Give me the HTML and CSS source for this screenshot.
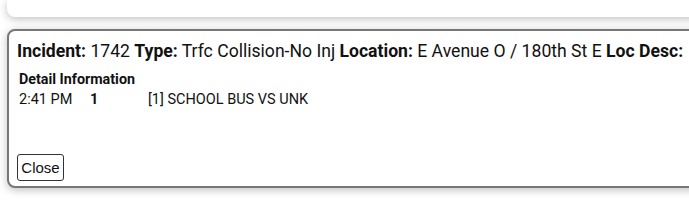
FILE: index.html
```html
<!DOCTYPE html>
<html lang="en">
<head>
  <meta charset="UTF-8">
  <meta name="viewport" content="width=device-width, initial-scale=1.0">
  <title>Incident Detail</title>
  <link rel="stylesheet" href="styles.css">
</head>
<body>
  <div class="card card-prev"></div>

  <div class="card incident">
    <div class="summary">
      <b>Incident:</b> 1742 <b>Type:</b> Trfc Collision-No Inj <b>Location:</b> E Avenue O / 180th St E <b>Loc Desc:</b>
    </div>
    <div class="detail-title">Detail Information</div>
    <table class="detail">
      <tr>
        <td class="time">2:41 PM</td>
        <td class="unit">1</td>
        <td>[1] SCHOOL BUS VS UNK</td>
      </tr>
    </table>
    <button class="close-btn">Close</button>
  </div>
</body>
</html>
```

FILE: styles.css
```css
* {
  margin: 0;
  padding: 0;
  box-sizing: border-box;
}

body {
  font-family: Roboto, "Liberation Sans", sans-serif;
  background-color: #fff;
  color: #111;
  padding-left: 7px;
  overflow: hidden;
  width: 689px;
  height: 219px;
}

.card {
  width: 720px;
  background: #fff;
  border-radius: 8px;
  box-shadow: 0 2px 8px rgba(0, 0, 0, 0.25);
}

.card-prev {
  height: 17px;
  border-top-left-radius: 0;
  border-top-right-radius: 0;
}

.incident {
  margin-top: 12px;
  height: 159px;
  border: 2px solid #777;
  padding: 9px 0 0 8px;
}

.summary {
  font-size: 17.6px;
  line-height: 22px;
  white-space: nowrap;
}

.detail-title {
  margin-top: 8px;
  margin-left: 2px;
  font-size: 14.3px;
  font-weight: bold;
  line-height: 18px;
}

.detail {
  border-collapse: collapse;
  font-size: 14.5px;
  margin-left: 2px;
}

.detail td {
  padding: 3px 0;
  line-height: 18px;
}

.time {
  width: 71px;
}

.unit {
  width: 58px;
  font-weight: bold;
}

.close-btn {
  display: block;
  margin-top: 42px;
  font-family: "Liberation Sans", Arial, sans-serif;
  font-size: 15px;
  color: #111;
  background: #fff;
  border: 1.5px solid #333;
  border-radius: 3px;
  padding: 3px 3px;
  width: 47px;
  height: 27px;
}
```
